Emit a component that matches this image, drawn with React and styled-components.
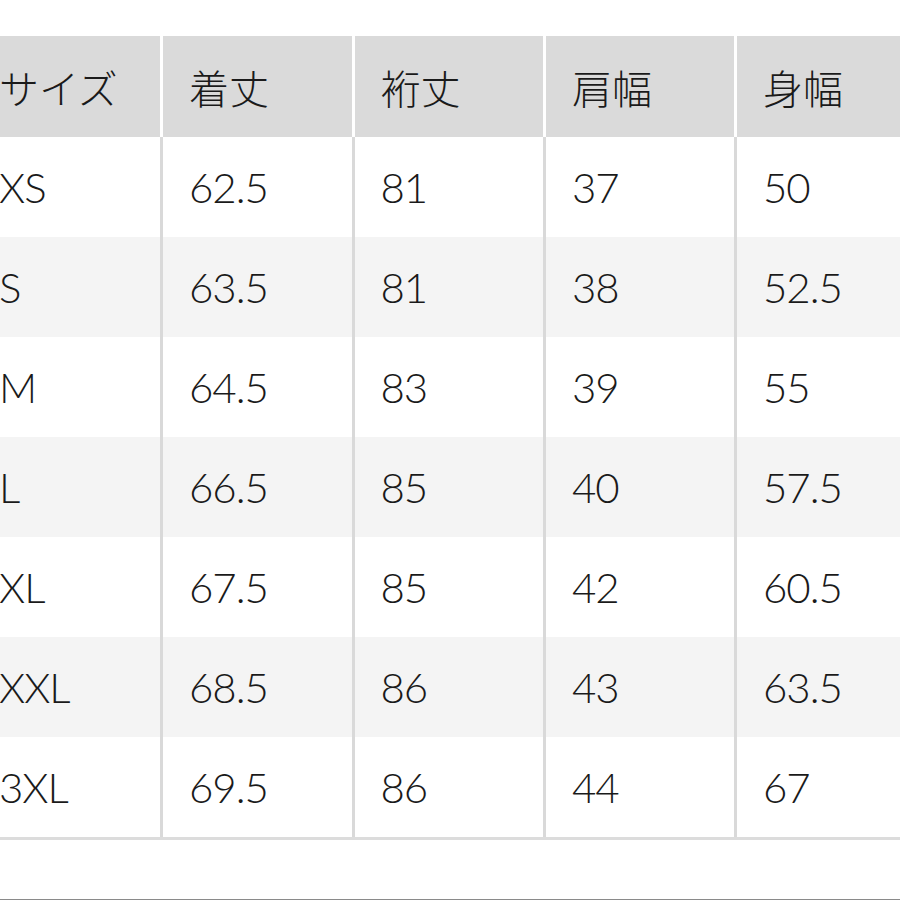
import React from "react";
import styled, { createGlobalStyle } from "styled-components";

const Global = createGlobalStyle`
  html, body { margin: 0; padding: 0; background: #ffffff; overflow: hidden; }
  body { width: 900px; height: 900px; }
`;

const Page = styled.div`
  width: 900px;
  height: 900px;
  overflow: hidden;
  display: flex;
  flex-direction: column;
  padding-top: 36px;
  box-sizing: border-box;
`;

const Table = styled.div`
  display: flex;
  flex-direction: column;
  margin-left: -31px;
  width: 960px;
  border-bottom: 3px solid #dcdcdc;
`;

const Row = styled.div`
  display: grid;
  grid-template-columns: 191px 191.5px 191.5px 191px 191px;
  height: ${(p) => (p.$header ? 101 : 100)}px;
  background: ${(p) => (p.$header ? "#dadada" : p.$shade ? "#f4f4f4" : "#ffffff")};
`;

const Cell = styled.div`
  display: flex;
  align-items: center;
  padding-left: ${(p) => (p.$first ? 30 : 26)}px;
  box-sizing: border-box;
  border-left: ${(p) => (p.$first ? "none" : p.$header ? "3px solid #ffffff" : "3px solid #d9d9d9")};
  font-family: ${(p) =>
    p.$header
      ? '"Noto Sans CJK JP", "Noto Sans", sans-serif'
      : 'Lato, "Noto Sans", sans-serif'};
  font-size: ${(p) => (p.$header ? 40 : 42)}px;
  font-weight: 300;
  letter-spacing: ${(p) => (p.$header ? "0" : "-1px")};
  color: #1a1a1a;
  white-space: nowrap;
`;

const Spacer = styled.div`
  flex: 1;
`;

const BottomRule = styled.div`
  height: 1px;
  background: #8a8a8a;
`;

const headers = ["サイズ", "着丈", "裄丈", "肩幅", "身幅"];
const rows = [
  ["XS", "62.5", "81", "37", "50"],
  ["S", "63.5", "81", "38", "52.5"],
  ["M", "64.5", "83", "39", "55"],
  ["L", "66.5", "85", "40", "57.5"],
  ["XL", "67.5", "85", "42", "60.5"],
  ["XXL", "68.5", "86", "43", "63.5"],
  ["3XL", "69.5", "86", "44", "67"],
];

export default function App() {
  return (
    <>
      <Global />
      <Page>
        <Table>
          <Row $header>
            {headers.map((h, i) => (
              <Cell key={h} $header $first={i === 0}>
                {h}
              </Cell>
            ))}
          </Row>
          {rows.map((r, ri) => (
            <Row key={r[0]} $shade={ri % 2 === 1}>
              {r.map((v, i) => (
                <Cell key={i} $first={i === 0}>
                  {v}
                </Cell>
              ))}
            </Row>
          ))}
        </Table>
        <Spacer />
        <BottomRule />
      </Page>
    </>
  );
}
